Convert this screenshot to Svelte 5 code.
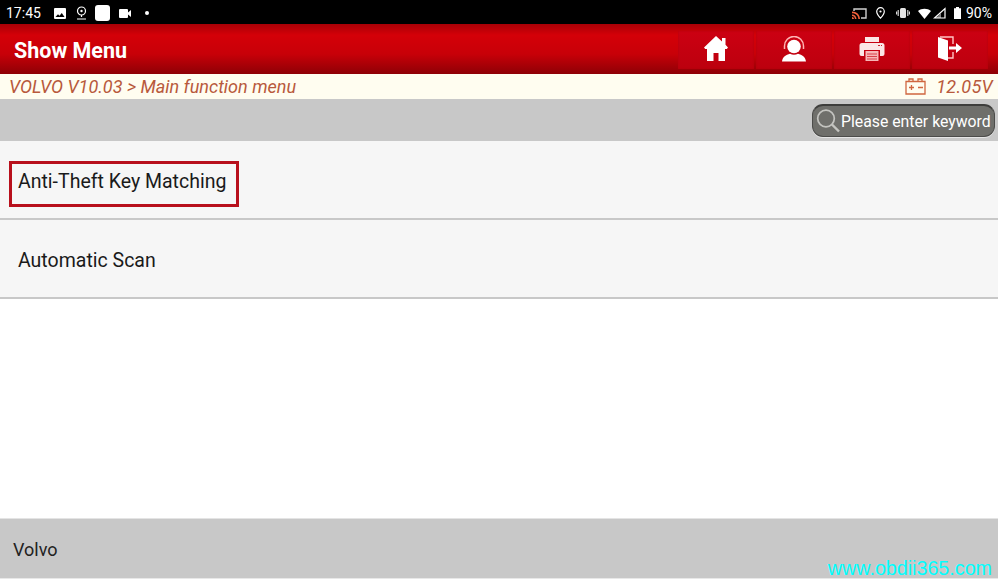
<script>
    const navItems = ["home", "support", "print", "exit"];
    const menuItems = [
        { label: "Anti-Theft Key Matching", selected: true },
        { label: "Automatic Scan", selected: false },
    ];
</script>

<div class="screen">
    <div class="statusbar">
        <div class="status-left">
            <span class="clock">17:45</span>
            <svg class="image" width="12" height="11" viewBox="0 0 12 11">
                <path fill="#fff" fill-rule="evenodd" d="M1 0h10a1 1 0 0 1 1 1v9a1 1 0 0 1-1 1H1a1 1 0 0 1-1-1V1a1 1 0 0 1 1-1zm.500 9h9L7.800 5 5.500 7.800 4 6.300z" />
            </svg>
            <svg class="place" width="11" height="14" viewBox="0 0 11 14">
                <circle cx="5.500" cy="5" r="4" fill="none" stroke="#fff" stroke-width="1.200" />
                <circle cx="5.500" cy="5" r="1.200" fill="#fff" />
                <path d="M5.500 9v2M1 13h9" stroke="#fff" stroke-width="1.200" />
            </svg>
            <span class="app-square"></span>
            <svg class="video" width="12" height="9" viewBox="0 0 12 9">
                <rect x="0" y="0" width="9" height="9" rx="1" fill="#fff" />
                <path d="M9 3.500L12 1v7L9 5.500z" fill="#fff" />
            </svg>
            <span class="dot"></span>
        </div>
        <div class="status-right">
            <svg width="15" height="11" viewBox="0 0 15 11">
                <path d="M2 3V1h12v9H9" fill="none" stroke="#cfcfcf" stroke-width="1.400" />
                <path d="M0 3.500c4.500 0 8 3 8 7.500H6.300C6.300 8 4 5.300 0 5.300zM0 6.500c2.500 0 4.500 2 4.500 4.500H2.900c0-1.700-1.300-3-2.900-3zM0 9c1.200 0 2 .9 2 2H0z" fill="#f0603a" />
            </svg>
            <svg class="pin" width="9" height="12" viewBox="0 0 9 12">
                <path d="M4.500 .7a3.800 3.800 0 0 1 3.800 3.800c0 2.700-3.800 6.700-3.800 6.700S.7 7.200.7 4.500A3.800 3.800 0 0 1 4.500.7z" fill="none" stroke="#fff" stroke-width="1.200" />
                <circle cx="4.500" cy="4.500" r="1.100" fill="#fff" />
            </svg>
            <svg class="vibrate" width="14" height="10" viewBox="0 0 14 10">
                <rect x="4" y="0" width="6" height="10" rx="1.500" fill="#e4e4e4" />
                <path d="M2.200 2v6M0.600 3.500v3M11.800 2v6M13.400 3.500v3" stroke="#e4e4e4" stroke-width="1.100" />
            </svg>
            <svg class="wifi" width="13" height="11" viewBox="0 0 13 11">
                <path d="M0 3C3.500 0 9.500 0 13 3L6.500 11z" fill="#fff" />
            </svg>
            <svg class="signal" width="13" height="12" viewBox="0 0 13 12">
                <path d="M12 1.500V11H1.500z" fill="none" stroke="#fff" stroke-width="1.200" />
                <path d="M8 11V6L3 11z" fill="#fff" opacity=".5" />
            </svg>
            <svg class="batt" width="7" height="12" viewBox="0 0 7 12">
                <path d="M2 0h3v1.200h2V12H0V1.200h2z" fill="#fff" />
            </svg>
            <span class="percent">90%</span>
        </div>
    </div>

    <header class="titlebar">
        <h1>Show Menu</h1>
        <nav>
            {#each navItems as item}
                <button type="button" aria-label={item}>
                    {#if item === "home"}
                        <svg width="24" height="25" viewBox="0 0 24 25">
                            <path fill="#fff" d="M12 0l6 5.500V2h3.500v6.800L24 11.500l-1.200 1.500H21v12h-6.500v-8h-5v8H3V13H1.200L0 11.500z" />
                        </svg>
                    {:else if item === "support"}
                        <svg width="26" height="26" viewBox="0 0 26 26">
                            <circle cx="13" cy="10.500" r="6.800" fill="#fff" />
                            <path d="M3.500 13V10a9.500 9.500 0 0 1 19 0v3" fill="none" stroke="#ffb4b4" stroke-width="1.500" />
                            <path d="M1 25.500c.5-4.500 4-7 8-7.800 2.500 1.300 5.500 1.300 8 0 4 .8 7.500 3.300 8 7.800z" fill="#fff" />
                        </svg>
                    {:else if item === "print"}
                        <svg width="26" height="25" viewBox="0 0 26 25">
                            <path fill="#fbe6e6" d="M6 1h14v5H6z" />
                            <path fill="#fbe6e6" d="M3 7h20a2.500 2.500 0 0 1 2.500 2.500V18a2 2 0 0 1-2 2H21v-6H5v6H2.500a2 2 0 0 1-2-2V9.500A2.500 2.500 0 0 1 3 7z" />
                            <path fill="#f7b6b6" d="M6.500 15h13v10h-13z" />
                            <path d="M8 18h10M8 20.500h10M8 23h10" stroke="#d8404a" stroke-width="1" />
                            <path d="M19 9.500h2M22 9.500h1" stroke="#c9202a" stroke-width="1.200" />
                        </svg>
                    {:else}
                        <svg width="26" height="26" viewBox="0 0 26 26">
                            <path fill="#fff" d="M1 1l10 3.500V25L1 21.500z" />
                            <path d="M3 1h13v7M16 16v6h-5" fill="none" stroke="#ffc4c4" stroke-width="1.400" />
                            <path fill="#fff" d="M12 10.500h7V7l6 5-6 5v-3.500h-7z" />
                        </svg>
                    {/if}
                </button>
            {/each}
        </nav>
    </header>

    <div class="crumbs">
        <span>VOLVO V10.03 &gt; Main function menu</span>
        <div class="battery">
            <svg width="21" height="17" viewBox="0 0 21 17">
                <path d="M1 3.500h19v12.500H1zM4 3.500V1h4v2.500M13 3.500V1h4v2.500M4 9.500h5M6.500 7v5M13 9.500h5" fill="none" stroke="#d0663f" stroke-width="1.300" />
            </svg>
            <span class="volts">12.05V</span>
        </div>
    </div>

    <div class="searchbar">
        <div class="search">
            <svg width="26" height="26" viewBox="0 0 26 26">
                <circle cx="11" cy="10.500" r="8.300" fill="none" stroke="#c4c4c0" stroke-width="1.700" />
                <path d="M17 16.500l7 7" stroke="#c4c4c0" stroke-width="2.400" />
            </svg>
            <span class="placeholder">Please enter keyword</span>
        </div>
    </div>

    <main>
        {#each menuItems as item}
            <div class="row">
                <span class:selected={item.selected}>{item.label}</span>
            </div>
        {/each}
    </main>

    <footer>
        <span class="brand">Volvo</span>
        <span class="watermark">www.obdii365.com</span>
    </footer>
</div>

<style>
    :global(body) {
        margin: 0;
        background: #fff;
    }

    .screen {
        width: 998px;
        height: 579px;
        display: flex;
        flex-direction: column;
        overflow: hidden;
        font-family: Roboto, "Liberation Sans", sans-serif;
    }

    .statusbar {
        height: 24px;
        box-sizing: border-box;
        padding: 2px 6px 0 6px;
        background: #000;
        color: #fff;
        display: flex;
        justify-content: space-between;
        align-items: center;
        font-size: 14px;
    }

    .status-left,
    .status-right {
        display: flex;
        align-items: center;
    }

    .clock {
        width: 48px;
    }

    .place {
        margin-left: 10px;
    }

    .app-square {
        width: 15px;
        height: 16px;
        border-radius: 3px;
        background: #fff;
        margin-left: 8px;
    }

    .video {
        margin-left: 9px;
    }

    .dot {
        width: 4px;
        height: 4px;
        border-radius: 50%;
        background: #fff;
        margin-left: 14px;
    }

    .pin {
        margin-left: 9px;
    }

    .vibrate {
        margin-left: 11px;
    }

    .wifi {
        margin-left: 8px;
    }

    .signal {
        margin-left: 2px;
    }

    .batt {
        margin-left: 8px;
    }

    .percent {
        margin-left: 5px;
    }

    .titlebar {
        height: 50px;
        box-sizing: border-box;
        background: linear-gradient(#a80006 0%, #d40008 22%, #c80008 60%, #8e0006 100%);
        display: flex;
        justify-content: space-between;
        align-items: center;
        padding: 2px 10px 0 14px;
    }

    h1 {
        margin: 0;
        color: #fff;
        font-size: 21.500px;
        font-weight: 700;
    }

    nav {
        display: flex;
        gap: 2px;
    }

    nav button {
        width: 76px;
        height: 38px;
        border: none;
        padding: 0 0 3px;
        background: linear-gradient(#cc0012, #bc000e);
        box-shadow: inset 0 0 2px #b00008;
        display: flex;
        align-items: center;
        justify-content: center;
    }

    .crumbs {
        height: 25px;
        background: #fffdf0;
        color: #b8593c;
        display: flex;
        justify-content: space-between;
        align-items: center;
        padding: 0 5px 0 9px;
        font-size: 18.050px;
        font-style: italic;
    }

    .battery {
        display: flex;
        align-items: center;
        gap: 10px;
    }

    .volts {
        letter-spacing: 0.300px;
    }

    .searchbar {
        height: 42px;
        background: #c8c8c8;
        display: flex;
        justify-content: flex-end;
        align-items: center;
        padding-right: 3px;
    }

    .search {
        width: 183px;
        height: 33px;
        box-sizing: border-box;
        border-radius: 11px;
        background: #6f6f6b;
        border: 1px solid #4c4c4a;
        border-top: 2px solid #3e3e3c;
        box-shadow: 0 1px 0 #e6e6e6;
        color: #fff;
        display: flex;
        align-items: center;
        padding-left: 2px;
        font-size: 15.800px;
        white-space: nowrap;
    }

    .placeholder {
        padding-top: 1px;
    }

    main {
        flex: 1;
    }

    .row {
        height: 79px;
        box-sizing: border-box;
        background: #f6f6f6;
        border-bottom: 2px solid #c8c8c8;
        display: flex;
        align-items: center;
        padding-left: 9px;
        font-size: 19.500px;
        color: #1a1a1a;
    }

    .row span {
        padding: 4px 9px 0;
    }

    .row span.selected {
        box-sizing: border-box;
        width: 230px;
        height: 46px;
        margin-top: 9px;
        padding: 0 0 0 6px;
        line-height: 35px;
        border: 3px solid #b8101c;
        white-space: nowrap;
    }

    footer {
        height: 61px;
        box-sizing: border-box;
        background: #c8c8c8;
        border-top: 1px solid #e4e4e4;
        border-bottom: 1px solid #e8e8e8;
        display: flex;
        justify-content: space-between;
        align-items: center;
        padding: 0 6px 0 13px;
        font-size: 18px;
        color: #222;
    }

    .brand {
        padding-top: 2px;
    }

    .watermark {
        align-self: flex-end;
        font-family: "Liberation Sans", sans-serif;
        font-size: 19.700px;
        color: #00ffff;
        line-height: 20px;
    }
</style>
